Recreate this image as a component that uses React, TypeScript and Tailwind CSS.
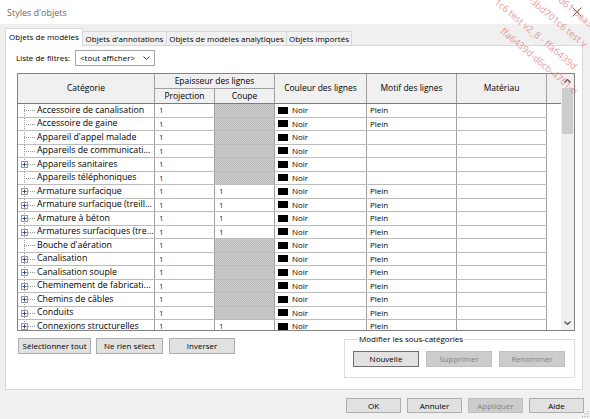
import React from "react";

type Row = { n: string; plus: boolean; coupe: boolean; motif: string };

const rows: Row[] = [
  { n: "Accessoire de canalisation", plus: false, coupe: false, motif: "Plein" },
  { n: "Accessoire de gaine", plus: false, coupe: false, motif: "Plein" },
  { n: "Appareil d'appel malade", plus: false, coupe: false, motif: "" },
  { n: "Appareils de communicati...", plus: false, coupe: false, motif: "" },
  { n: "Appareils sanitaires", plus: true, coupe: false, motif: "" },
  { n: "Appareils téléphoniques", plus: false, coupe: false, motif: "" },
  { n: "Armature surfacique", plus: true, coupe: true, motif: "Plein" },
  { n: "Armature surfacique (treill...", plus: true, coupe: true, motif: "Plein" },
  { n: "Armature à béton", plus: true, coupe: true, motif: "Plein" },
  { n: "Armatures surfaciques (tre...", plus: true, coupe: true, motif: "Plein" },
  { n: "Bouche d'aération", plus: false, coupe: false, motif: "Plein" },
  { n: "Canalisation", plus: true, coupe: false, motif: "Plein" },
  { n: "Canalisation souple", plus: true, coupe: false, motif: "Plein" },
  { n: "Cheminement de fabricati...", plus: true, coupe: false, motif: "Plein" },
  { n: "Chemins de câbles", plus: true, coupe: false, motif: "Plein" },
  { n: "Conduits", plus: true, coupe: false, motif: "Plein" },
  { n: "Connexions structurelles", plus: true, coupe: true, motif: "Plein" },
];

function Btn({ label, w, disabled, focus }: { label: string; w: string; disabled?: boolean; focus?: boolean }) {
  return (
    <div
      className={`${w} h-full shrink-0 flex items-center justify-center border ${
        disabled
          ? "bg-[#cccccc] border-[#bfbfbf] text-[#838383]"
          : focus
          ? "bg-[#e1e1e1] border-[#6f6f6f] text-black"
          : "bg-[#e1e1e1] border-[#adadad] text-black"
      }`}
    >
      {label}
    </div>
  );
}

function TreeRow({ r }: { r: Row }) {
  return (
    <div className="flex h-[13.5px] border-b border-[#bcbcbc] w-[529px]">
      <div className="relative w-[137px] shrink-0 border-r border-[#a0a0a0] flex items-center pl-[19px] whitespace-nowrap overflow-hidden text-[8.8px]">
        <span className="absolute left-[6px] -top-px -bottom-px border-l border-dotted border-[#9a9a9a]" />
        <span className="absolute left-[6px] w-[11px] top-[6px] border-t border-dotted border-[#9a9a9a]" />
        {r.plus && (
          <span className="absolute left-[3px] top-[3px] w-[7px] h-[7px] bg-white border border-[#9a9a9a] flex items-center justify-center">
            <svg width="5" height="5" viewBox="0 0 5 5">
              <path d="M0.5 2.5H4.5M2.5 0.5V4.5" stroke="#2a4b8f" strokeWidth="1" />
            </svg>
          </span>
        )}
        <span>{r.n}</span>
      </div>
      <div className="w-[60px] shrink-0 border-r border-[#a0a0a0] flex items-center pl-[4px] text-[#4a1040]">1</div>
      {r.coupe ? (
        <div className="w-[60px] shrink-0 border-r border-[#a0a0a0] flex items-center pl-[4px] text-[#4a1040]">1</div>
      ) : (
        <div className="w-[60px] shrink-0 border-r border-[#a0a0a0] bg-[#c6c6c6] bg-[image:repeating-conic-gradient(#bdbdbd_0%_25%,#cdcdcd_0%_50%)] bg-[length:2px_2px]" />
      )}
      <div className="w-[92px] shrink-0 border-r border-[#a0a0a0] flex items-center pl-[3px]">
        <span className="w-[10px] h-[7px] bg-black mr-[4px]" />
        <span>Noir</span>
      </div>
      <div className="w-[90px] shrink-0 border-r border-[#a0a0a0] flex items-center pl-[3px]">{r.motif}</div>
      <div className="w-[90px] shrink-0 border-r border-[#a0a0a0]" />
    </div>
  );
}

export default function App() {
  return (
    <div
      className="relative w-[590px] h-[419px] overflow-hidden bg-[#f0f0f0] text-[8px] leading-none text-black"
      style={{ fontFamily: '"Open Sans", "Noto Sans", sans-serif' }}
    >
      {/* title bar */}
      <div className="h-[24px] bg-white flex items-center pl-[7px] pr-[8px] justify-between">
        <span className="text-[9px] text-[#6a6a6a]">Styles d'objets</span>
        <svg width="10" height="10" viewBox="0 0 10 10">
          <path d="M0.5 0.5L9.5 9.5M9.5 0.5L0.5 9.5" stroke="#6a6a6a" strokeWidth="1" />
        </svg>
      </div>

      {/* tabs */}
      <div className="mt-[4px] ml-[5px] flex items-end h-[17px]">
        <div className="relative z-10 w-[78px] h-[18px] -mb-px bg-white border border-b-0 border-[#d9d9d9] flex items-center justify-center pb-[1px]">
          Objets de modèles
        </div>
        <div className="w-[85px] h-[14px] -ml-px bg-[#f0f0f0] border border-b-0 border-[#d9d9d9] flex items-center justify-center">
          Objets d'annotations
        </div>
        <div className="w-[121px] h-[14px] -ml-px bg-[#f0f0f0] border border-b-0 border-[#d9d9d9] flex items-center justify-center">
          Objets de modèles analytiques
        </div>
        <div className="w-[66px] h-[14px] -ml-px bg-[#f0f0f0] border border-b-0 border-[#d9d9d9] flex items-center justify-center">
          Objets importés
        </div>
      </div>

      {/* panel */}
      <div className="ml-[5px] w-[578px] h-[345px] bg-white border border-[#d9d9d9] pl-[11px] pr-[7px] pt-[4px] flex flex-col">
        <div className="flex items-center h-[16px]">
          <span className="w-[59px] -ml-px">Liste de filtres:</span>
          <div className="w-[80px] h-[16px] border border-[#a6a6a6] flex items-center justify-between pl-[4px] pr-[4px]">
            <span>&lt;tout afficher&gt;</span>
            <svg width="7" height="4" viewBox="0 0 7 4">
              <path d="M0.5 0.5L3.5 3.5L6.5 0.5" stroke="#404040" strokeWidth="1" fill="none" />
            </svg>
          </div>
        </div>

        {/* table */}
        <div className="mt-[7px] h-[258px] border border-[#828282] flex">
          <div className="flex-1 flex flex-col min-w-0">
            <div className="h-[30px] shrink-0 bg-[#f0f0f0] border-b border-[#7a7a7a] flex text-[8.5px]">
              <div className="w-[137px] shrink-0 border-r border-[#a0a0a0] flex items-center justify-center">Catégorie</div>
              <div className="w-[120px] shrink-0 border-r border-[#a0a0a0] flex flex-col">
                <div className="h-[15px] border-b border-[#a0a0a0] flex items-center justify-center">Epaisseur des lignes</div>
                <div className="flex-1 flex">
                  <div className="w-[60px] border-r border-[#a0a0a0] flex items-center justify-center">Projection</div>
                  <div className="flex-1 flex items-center justify-center">Coupe</div>
                </div>
              </div>
              <div className="w-[92px] shrink-0 border-r border-[#a0a0a0] flex items-center justify-center">Couleur des lignes</div>
              <div className="w-[90px] shrink-0 border-r border-[#a0a0a0] flex items-center justify-center">Motif des lignes</div>
              <div className="w-[90px] shrink-0 border-r border-[#a0a0a0] flex items-center justify-center">Matériau</div>
              <div className="flex-1" />
            </div>
            <div className="flex-1 overflow-hidden bg-white">
              {rows.map((r) => (
                <TreeRow key={r.n} r={r} />
              ))}
            </div>
          </div>
          {/* scrollbar */}
          <div className="w-[13px] shrink-0 bg-[#f0f0f0] flex flex-col items-center">
            <div className="h-[14px] w-full flex items-center justify-center">
              <svg width="7" height="4" viewBox="0 0 7 4">
                <path d="M0.5 3.5L3.5 0.5L6.5 3.5" stroke="#505050" strokeWidth="1.2" fill="none" />
              </svg>
            </div>
            <div className="w-[11px] h-[46px] bg-[#cdcdcd]" />
            <div className="flex-1" />
            <div className="h-[14px] w-full flex items-center justify-center">
              <svg width="7" height="4" viewBox="0 0 7 4">
                <path d="M0.5 0.5L3.5 3.5L6.5 0.5" stroke="#505050" strokeWidth="1.2" fill="none" />
              </svg>
            </div>
          </div>
        </div>

        {/* bottom of panel */}
        <div className="mt-[7px] flex justify-between items-start">
          <div className="ml-px flex h-[16px]">
            <Btn label="Sélectionner tout" w="w-[73px]" />
            <div className="w-[5px]" />
            <Btn label="Ne rien sélect" w="w-[67px]" />
            <div className="w-[6px]" />
            <Btn label="Inverser" w="w-[66px]" />
          </div>
          <fieldset className="mt-[-3px] w-[231px] h-[43px] border border-[#dcdcdc] pl-[8px] pr-[9px] flex">
            <legend className="ml-[5px] px-px leading-[8px]">Modifier les sous-catégories</legend>
            <div className="mt-[8px] flex justify-between w-full h-[16px]">
              <Btn label="Nouvelle" w="w-[66px]" focus />
              <Btn label="Supprimer" w="w-[66px]" disabled />
              <Btn label="Renommer" w="w-[66px]" disabled />
            </div>
          </fieldset>
        </div>
      </div>

      {/* dialog buttons */}
      <div className="mt-[8px] pr-[6px] flex justify-end gap-[6px] h-[15px]">
        <Btn label="OK" w="w-[55px]" />
        <Btn label="Annuler" w="w-[55px]" />
        <Btn label="Appliquer" w="w-[55px]" disabled />
        <Btn label="Aide" w="w-[55px]" />
      </div>

      {/* resize grip */}
      <svg className="absolute right-[1px] bottom-[1px]" width="8" height="8" viewBox="0 0 8 8">
        <rect x="6" y="1" width="1" height="1" fill="#a0a0a0" />
        <rect x="3.5" y="3.5" width="1" height="1" fill="#a0a0a0" />
        <rect x="6" y="3.5" width="1" height="1" fill="#a0a0a0" />
        <rect x="1" y="6" width="1" height="1" fill="#a0a0a0" />
        <rect x="3.5" y="6" width="1" height="1" fill="#a0a0a0" />
        <rect x="6" y="6" width="1" height="1" fill="#a0a0a0" />
      </svg>

      {/* watermark */}
      <div className="pointer-events-none absolute inset-0 text-[9.5px] leading-none text-[#e27c7c] opacity-75 whitespace-nowrap">
        <div className="absolute left-[505px] top-[26px] origin-top-left rotate-[40deg]">ffa6439d-d6cb-4761-b</div>
        <div className="absolute left-[499px] top-[-3px] origin-top-left rotate-[40deg]">1c6 test v2_8 - ffa6439d</div>
        <div className="absolute left-[533px] top-[-5px] origin-top-left rotate-[40deg]">-3bd701c6 test v</div>
        <div className="absolute left-[563px] top-[-5px] origin-top-left rotate-[40deg]">d61-baa3-3</div>
      </div>
    </div>
  );
}
